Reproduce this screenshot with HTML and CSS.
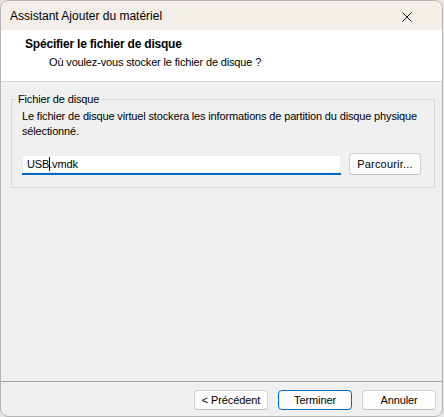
FILE: index.html
```html
<!DOCTYPE html>
<html lang="fr">
<head>
  <meta charset="UTF-8">
  <title>Assistant Ajouter du matériel</title>
  <link rel="stylesheet" href="styles.css">
</head>
<body>
  <div class="window">
    <div class="titlebar">
      <span class="title">Assistant Ajouter du matériel</span>
      <svg class="close" width="10" height="10" viewBox="0 0 10 10">
        <path d="M0.5 0.5 L9.5 9.5 M9.5 0.5 L0.5 9.5" stroke="#1a1a1a" stroke-width="1"/>
      </svg>
    </div>
    <div class="header">
      <div class="header-title">Spécifier le fichier de disque</div>
      <div class="header-sub">Où voulez-vous stocker le fichier de disque ?</div>
    </div>
    <div class="content">
      <fieldset class="group">
        <legend>Fichier de disque</legend>
        <p class="desc">Le fichier de disque virtuel stockera les informations de partition du disque physique sélectionné.</p>
        <div class="file-row">
          <div class="file-input">USB<span class="caret"></span>.vmdk</div>
          <button class="btn browse">Parcourir...</button>
        </div>
      </fieldset>
    </div>
    <div class="footer">
      <button class="btn">&lt; Précédent</button>
      <button class="btn default">Terminer</button>
      <button class="btn">Annuler</button>
    </div>
  </div>
</body>
</html>
```

FILE: styles.css
```css
/* Base */
body {
  margin: 0;
  background: #e6e6e6;
  font-family: 'Liberation Sans', Arial, sans-serif;
  font-size: 11px;
  letter-spacing: -0.15px;
  color: #000;
}

.window {
  width: 441px;
  height: 415px;
  border: 1px solid #b4b4b4;
  border-radius: 8px;
  overflow: hidden;
  display: flex;
  flex-direction: column;
  background: #f0f0f0;
}

/* Title bar */
.titlebar {
  height: 29px;
  flex: none;
  display: flex;
  align-items: center;
  justify-content: space-between;
  padding: 0 30px 0 9px;
  background: #f3eee8;
}

.titlebar .title {
  font-size: 12px;
  letter-spacing: 0;
  line-height: 15px;
  padding-top: 2px;
}

.close {
  display: block;
  margin-top: 2px;
}

/* Header */
.header {
  height: 52px;
  flex: none;
  background: #fff;
  border-bottom: 1px solid #d6d6d6;
  padding-left: 24px;
  box-sizing: border-box;
  padding-top: 7px;
}

.header-title {
  font-weight: bold;
  font-size: 12px;
  letter-spacing: -0.2px;
  line-height: 15px;
}

.header-sub {
  line-height: 15px;
  margin-top: 3px;
  padding-left: 24px;
}

/* Content */
.content {
  flex: 1;
  padding: 10px 7px 0 10px;
}

.group {
  margin: 0;
  border: 1px solid #d9d9d9;
  padding: 0 10px 12px 10px;
  min-inline-size: 0;
}

.group legend {
  margin-left: -6px;
  padding: 0 2px;
  line-height: 15px;
}

.desc {
  margin: 2px 0 0;
  line-height: 15px;
}

.file-row {
  display: flex;
  align-items: flex-end;
  gap: 8px;
  margin-top: 14px;
}

.file-input {
  width: 314px;
  height: 18px;
  line-height: 18px;
  padding: 0 0 0 5px;
  background: #fff;
  border-bottom: 2px solid #0067c0;
  box-shadow: 0 0 0 1px #ececec inset;
}

.caret {
  display: inline-block;
  width: 1px;
  height: 14px;
  margin-right: -1px;
  background: #000;
  vertical-align: -3px;
}

/* Buttons */
.btn {
  font-family: inherit;
  font-size: 11px;
  letter-spacing: -0.1px;
  color: #000;
  height: 20px;
  width: 74px;
  padding: 0;
  background: #fdfdfd;
  border: 1px solid #d0d0d0;
  border-bottom-color: #bcbcbc;
  border-radius: 4px;
  line-height: 17px;
}

.browse {
  width: 72px;
  height: 22px;
  letter-spacing: 0.2px;
}

.default {
  border: 1px solid #0067c0;
}

/* Footer */
.footer {
  height: 35px;
  flex: none;
  box-sizing: border-box;
  border-top: 1px solid #a0a0a0;
  display: flex;
  justify-content: flex-end;
  gap: 10px;
  padding: 8px 6px 0 0;
}
```
